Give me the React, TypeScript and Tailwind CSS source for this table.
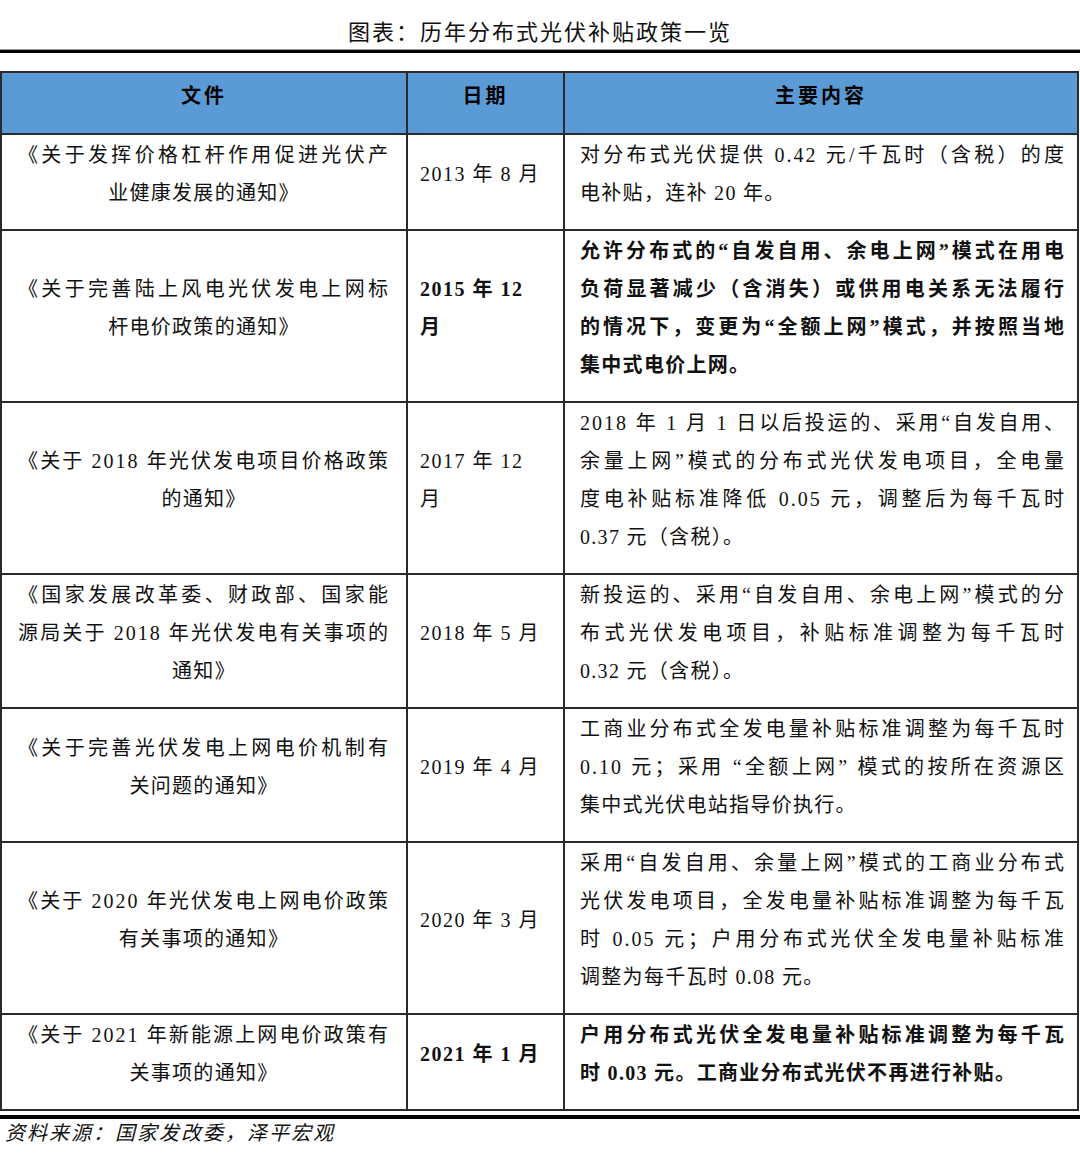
import React from "react";

type Row = {
  doc: string[];
  date: string[];
  body: string[];
  bold?: boolean;
};

const rows: Row[] = [
  {
    doc: ["《关于发挥价格杠杆作用促进光伏产", "业健康发展的通知》"],
    date: ["2013 年 8 月"],
    body: ["对分布式光伏提供 0.42 元/千瓦时（含税）的度", "电补贴，连补 20 年。"],
  },
  {
    doc: ["《关于完善陆上风电光伏发电上网标", "杆电价政策的通知》"],
    date: ["2015 年 12", "月"],
    body: [
      "允许分布式的“自发自用、余电上网”模式在用电",
      "负荷显著减少（含消失）或供用电关系无法履行",
      "的情况下，变更为“全额上网”模式，并按照当地",
      "集中式电价上网。",
    ],
    bold: true,
  },
  {
    doc: ["《关于 2018 年光伏发电项目价格政策", "的通知》"],
    date: ["2017 年 12", "月"],
    body: [
      "2018 年 1 月 1 日以后投运的、采用“自发自用、",
      "余量上网”模式的分布式光伏发电项目，全电量",
      "度电补贴标准降低 0.05 元，调整后为每千瓦时",
      "0.37 元（含税）。",
    ],
  },
  {
    doc: ["《国家发展改革委、财政部、国家能", "源局关于 2018 年光伏发电有关事项的", "通知》"],
    date: ["2018 年 5 月"],
    body: [
      "新投运的、采用“自发自用、余电上网”模式的分",
      "布式光伏发电项目，补贴标准调整为每千瓦时",
      "0.32 元（含税）。",
    ],
  },
  {
    doc: ["《关于完善光伏发电上网电价机制有", "关问题的通知》"],
    date: ["2019 年 4 月"],
    body: [
      "工商业分布式全发电量补贴标准调整为每千瓦时",
      "0.10 元；采用 “全额上网” 模式的按所在资源区",
      "集中式光伏电站指导价执行。",
    ],
  },
  {
    doc: ["《关于 2020 年光伏发电上网电价政策", "有关事项的通知》"],
    date: ["2020 年 3 月"],
    body: [
      "采用“自发自用、余量上网”模式的工商业分布式",
      "光伏发电项目，全发电量补贴标准调整为每千瓦",
      "时 0.05 元；户用分布式光伏全发电量补贴标准",
      "调整为每千瓦时 0.08 元。",
    ],
  },
  {
    doc: ["《关于 2021 年新能源上网电价政策有", "关事项的通知》"],
    date: ["2021 年 1 月"],
    body: ["户用分布式光伏全发电量补贴标准调整为每千瓦", "时 0.03 元。工商业分布式光伏不再进行补贴。"],
    bold: true,
  },
];

const cell = "flex items-center border-r-2 border-b-2 border-[#2b2b2b] pt-[1px] pb-[17px]";
// full lines are spread to the cell edge, the last line keeps its natural spacing
const full = "tracking-[2px] text-justify [text-align-last:justify]";

function Lines({ lines, lastClass }: { lines: string[]; lastClass: string }) {
  return (
    <>
      {lines.map((l, i) => (
        <div key={i} className={i < lines.length - 1 ? full : lastClass}>
          {l}
        </div>
      ))}
    </>
  );
}

export default function App() {
  return (
    <div className="w-[1080px] bg-white text-[#111] [font-family:'Liberation_Serif','Noto_Sans_CJK_SC',serif]">
      <div className="h-[49px] pt-[20px] text-center text-[22px] leading-[26px] tracking-[2px]">
        图表：历年分布式光伏补贴政策一览
      </div>
      <div className="h-[1px] bg-[#9a9a9a]" />
      <div className="h-[3px] bg-black" />
      <div className="h-[18px]" />

      <div className="grid grid-cols-[406px_157px_1fr] w-[1079px] border-l-2 border-t-2 border-[#2b2b2b] text-[20px]">
        {["文件", "日期", "主要内容"].map((h) => (
          <div
            key={h}
            className="h-[62px] flex items-center justify-center pb-[14px] border-r-2 border-b-2 border-[#2b2b2b] bg-[#5b9bd5] font-bold tracking-[3px] text-black"
          >
            {h}
          </div>
        ))}

        {rows.map((r, idx) => (
          <React.Fragment key={idx}>
            <div className={cell}>
              <div className="w-full px-[16px] leading-[38px]">
                <Lines lines={r.doc} lastClass="text-center tracking-[1.3px]" />
              </div>
            </div>
            <div className={cell}>
              <div className={`w-full pl-[12px] leading-[38px] tracking-[1.5px] ${r.bold ? "font-bold" : ""}`}>
                {r.date.map((d, i) => (
                  <div key={i}>{d}</div>
                ))}
              </div>
            </div>
            <div className={cell}>
              <div className={`w-full pl-[15px] pr-[11px] leading-[38px] ${r.bold ? "font-bold" : ""}`}>
                <Lines lines={r.body} lastClass="text-left tracking-[1.3px]" />
              </div>
            </div>
          </React.Fragment>
        ))}
      </div>

      <div className="h-[4px]" />
      <div className="h-[4px] bg-black" />
      <div className="pl-[5px] text-[20px] leading-[28px] tracking-[2px] italic">
        资料来源：国家发改委，泽平宏观
      </div>
    </div>
  );
}
